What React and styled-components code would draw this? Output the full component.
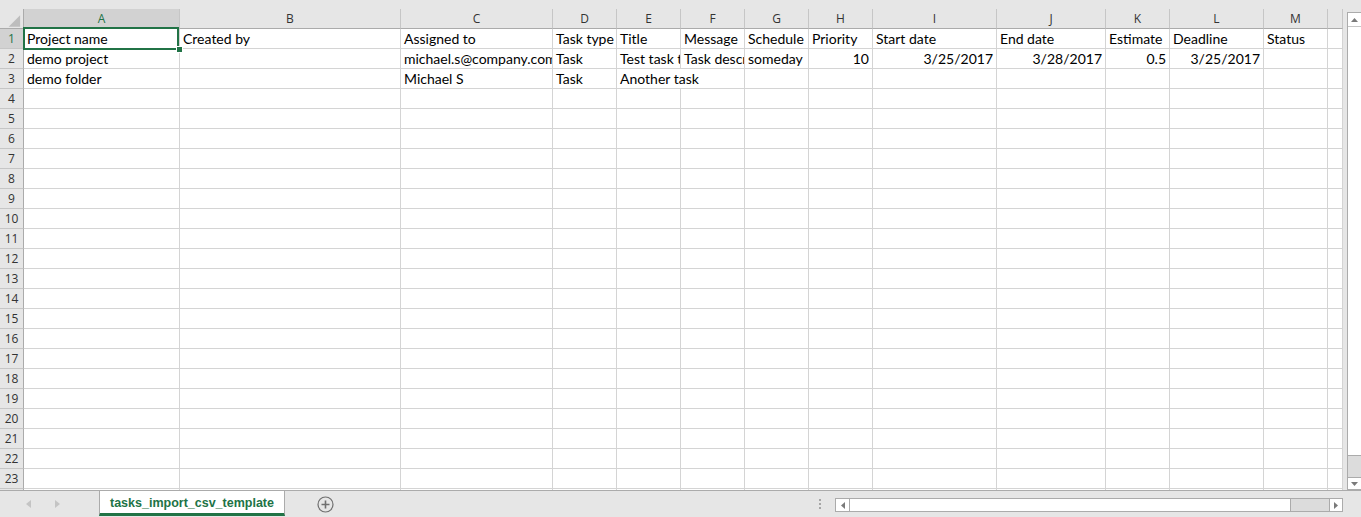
import React from 'react';
import styled, { createGlobalStyle } from 'styled-components';

const GlobalStyle = createGlobalStyle`
  html, body { margin: 0; padding: 0; background: #e6e6e6; overflow: hidden; }
  #root { width: 1361px; height: 517px; }
`;

const GREEN = '#217346';

const columns = [
  { l: 'A', w: 156 }, { l: 'B', w: 221 }, { l: 'C', w: 152 }, { l: 'D', w: 64 },
  { l: 'E', w: 64 }, { l: 'F', w: 64 }, { l: 'G', w: 64 }, { l: 'H', w: 64 },
  { l: 'I', w: 124 }, { l: 'J', w: 109 }, { l: 'K', w: 64 }, { l: 'L', w: 94 },
  { l: 'M', w: 64 }, { l: '', w: 15 },
];

const R = 'right';
const data = [
  ['Project name', 'Created by', 'Assigned to', 'Task type', 'Title', 'Message', 'Schedule', 'Priority', 'Start date', 'End date', 'Estimate', 'Deadline', 'Status', ''],
  ['demo project', '', 'michael.s@company.com', 'Task', 'Test task title', 'Task description', 'someday', { v: '10', a: R }, { v: '3/25/2017', a: R }, { v: '3/28/2017', a: R }, { v: '0.5', a: R }, { v: '3/25/2017', a: R }, '', ''],
  ['demo folder', '', 'Michael S', 'Task', { v: 'Another task', span: 2 }, null, '', '', '', '', '', '', '', ''],
];

const App = () => {
  const rows = [];
  for (let r = 0; r < 24; r++) rows.push(data[r] || columns.map(() => ''));
  return (
    <>
      <GlobalStyle />
      <Window>
        <TopBand />
        <Main>
          <Sheet $cols={columns.map((c) => c.w + 'px').join(' ')}>
            <Corner>
              <svg width="24" height="20" viewBox="0 0 24 20">
                <polygon points="21,6 21,18 9,18" fill="#bdbdbd" />
              </svg>
            </Corner>
            {columns.map((c, i) => (
              <ColHeader key={i} $selected={i === 0}>{c.l}</ColHeader>
            ))}
            {rows.map((row, r) => (
              <React.Fragment key={r}>
                <RowHeader $selected={r === 0}>{r + 1}</RowHeader>
                {row.map((cell, c) => {
                  if (cell === null) return null;
                  const obj = typeof cell === 'object' ? cell : { v: cell };
                  return (
                    <Cell key={c} $align={obj.a} $span={obj.span}>{obj.v}</Cell>
                  );
                })}
              </React.Fragment>
            ))}
            <Selection />
            <FillHandle />
          </Sheet>
          <VScroll>
            <VButton>
              <svg width="7" height="4" viewBox="0 0 7 4"><polygon points="0,4 7,4 3.5,0" fill="#7a7a7a" /></svg>
            </VButton>
            <VThumb />
            <VTrack />
            <VButton $bottom>
              <svg width="7" height="4" viewBox="0 0 7 4"><polygon points="0,0 7,0 3.5,4" fill="#7a7a7a" /></svg>
            </VButton>
          </VScroll>
        </Main>
        <BottomBar>
          <NavArea>
            <svg width="5" height="8" viewBox="0 0 5 8"><polygon points="5,0 5,8 0,4" fill="#c4c4c4" /></svg>
            <svg width="5" height="8" viewBox="0 0 5 8"><polygon points="0,0 0,8 5,4" fill="#c4c4c4" /></svg>
          </NavArea>
          <SheetTab>tasks_import_csv_template</SheetTab>
          <AddSheet>
            <svg width="17" height="17" viewBox="0 0 17 17">
              <circle cx="8.5" cy="8.5" r="7.5" fill="none" stroke="#6f6f6f" strokeWidth="1.2" />
              <path d="M8.5 4.5v8M4.5 8.5h8" stroke="#6f6f6f" strokeWidth="1.6" />
            </svg>
          </AddSheet>
          <Spacer />
          <Splitter>
            <Dot /><Dot /><Dot />
          </Splitter>
          <HScroll>
            <HButton>
              <svg width="4" height="7" viewBox="0 0 4 7"><polygon points="4,0 4,7 0,3.5" fill="#7a7a7a" /></svg>
            </HButton>
            <HThumb />
            <HTrack />
            <HButton $right>
              <svg width="4" height="7" viewBox="0 0 4 7"><polygon points="0,0 0,7 4,3.5" fill="#7a7a7a" /></svg>
            </HButton>
          </HScroll>
        </BottomBar>
      </Window>
    </>
  );
};

export default App;

const Window = styled.div`
  width: 1361px;
  height: 517px;
  display: flex;
  flex-direction: column;
  background: #e6e6e6;
  overflow: hidden;
`;

const TopBand = styled.div`
  height: 9px;
  flex: none;
`;

const Main = styled.div`
  display: flex;
  height: 481px;
  flex: none;
`;

const Sheet = styled.div`
  position: relative;
  width: 1343px;
  height: 481px;
  display: grid;
  grid-template-columns: 24px ${(p) => p.$cols};
  grid-auto-rows: 20px;
  overflow: hidden;
  background: #fff;
  flex: none;
`;

const Corner = styled.div`
  background: #e6e6e6;
  border-right: 1px solid #ababab;
  border-bottom: 1px solid #ababab;
  box-sizing: border-box;
  display: flex;
  svg { display: block; }
`;

const ColHeader = styled.div`
  box-sizing: border-box;
  background: ${(p) => (p.$selected ? '#d2d2d2' : '#e6e6e6')};
  color: ${(p) => (p.$selected ? GREEN : '#333')};
  border-right: 1px solid #c6c6c6;
  border-bottom: 1px solid #ababab;
  font-family: 'Open Sans', 'Noto Sans', sans-serif;
  font-size: 12px;
  line-height: 19px;
  text-align: center;
  overflow: hidden;
  min-width: 0;
`;

const RowHeader = styled.div`
  box-sizing: border-box;
  background: ${(p) => (p.$selected ? '#d2d2d2' : '#e6e6e6')};
  color: ${(p) => (p.$selected ? GREEN : '#333')};
  border-right: 1px solid #ababab;
  border-bottom: 1px solid #c6c6c6;
  font-family: 'Open Sans', 'Noto Sans', sans-serif;
  font-size: 12px;
  line-height: 20px;
  text-align: center;
`;

const Cell = styled.div`
  box-sizing: border-box;
  min-width: 0;
  grid-column: ${(p) => (p.$span ? `span ${p.$span}` : 'auto')};
  border-right: 1px solid #d4d4d4;
  border-bottom: 1px solid #d4d4d4;
  padding: 0 3px 0 3px;
  font-family: Lato, 'Liberation Sans', sans-serif;
  font-size: 14px;
  line-height: 19px;
  color: #000;
  white-space: nowrap;
  overflow: hidden;
  text-align: ${(p) => p.$align || 'left'};
`;

const Selection = styled.div`
  position: absolute;
  left: 23px;
  top: 18px;
  width: 156px;
  height: 23px;
  box-sizing: border-box;
  border: 2px solid ${GREEN};
  pointer-events: none;
`;

const FillHandle = styled.div`
  position: absolute;
  left: 176px;
  top: 37px;
  width: 5px;
  height: 5px;
  background: ${GREEN};
  border: 1px solid #fff;
`;

const VScroll = styled.div`
  margin-left: 4px;
  margin-top: 3px;
  width: 14px;
  height: 478px;
  box-sizing: border-box;
  display: flex;
  flex-direction: column;
  border-left: 1px solid #ababab;
  flex: none;
`;

const VButton = styled.div`
  height: ${(p) => (p.$bottom ? 13 : 14)}px;
  flex: none;
  background: #fff;
  box-sizing: border-box;
  border-top: 1px solid #ababab;
  border-bottom: ${(p) => (p.$bottom ? '1px solid #ababab' : 'none')};
  display: flex;
  align-items: center;
  justify-content: center;
  svg { display: block; }
`;

const VThumb = styled.div`
  height: 430px;
  flex: none;
  background: #fff;
  box-sizing: border-box;
  border-top: 1px solid #c6c6c6;
  border-bottom: 1px solid #ababab;
`;

const VTrack = styled.div`
  flex: 1;
  background: #dcdcdc;
`;

const BottomBar = styled.div`
  flex: 1;
  display: flex;
  align-items: stretch;
  border-top: 1px solid #ababab;
  box-sizing: border-box;
`;

const NavArea = styled.div`
  width: 99px;
  flex: none;
  display: flex;
  align-items: center;
  padding-left: 26px;
  gap: 24px;
  box-sizing: border-box;
  svg { display: block; }
`;

const SheetTab = styled.div`
  width: 186px;
  flex: none;
  box-sizing: border-box;
  background: #fff;
  border-left: 1px solid #ababab;
  border-right: 1px solid #ababab;
  border-bottom: 3px solid ${GREEN};
  margin-bottom: 1px;
  color: ${GREEN};
  font-family: 'Liberation Sans', Arial, sans-serif;
  font-weight: bold;
  font-size: 12.5px;
  display: flex;
  align-items: center;
  justify-content: center;
  padding-top: 2px;
`;

const AddSheet = styled.div`
  margin-left: 32px;
  display: flex;
  align-items: center;
  svg { display: block; }
`;

const Spacer = styled.div`
  flex: 1;
`;

const Splitter = styled.div`
  display: flex;
  flex-direction: column;
  justify-content: center;
  gap: 2px;
  margin-right: 14px;
`;

const Dot = styled.div`
  width: 2px;
  height: 2px;
  background: #a6a6a6;
`;

const HScroll = styled.div`
  width: 508px;
  height: 14px;
  margin-top: 7px;
  margin-right: 18px;
  display: flex;
  box-sizing: border-box;
  border: 1px solid #ababab;
  flex: none;
  background: #dcdcdc;
`;

const HButton = styled.div`
  width: ${(p) => (p.$right ? 13 : 14)}px;
  flex: none;
  background: #fff;
  box-sizing: border-box;
  border-left: ${(p) => (p.$right ? '1px solid #ababab' : 'none')};
  border-right: ${(p) => (p.$right ? 'none' : '1px solid #ababab')};
  display: flex;
  align-items: center;
  justify-content: center;
  svg { display: block; }
`;

const HThumb = styled.div`
  width: 441px;
  flex: none;
  background: #fff;
  box-sizing: border-box;
  border-right: 1px solid #ababab;
`;

const HTrack = styled.div`
  flex: 1;
  background: #dcdcdc;
`;
